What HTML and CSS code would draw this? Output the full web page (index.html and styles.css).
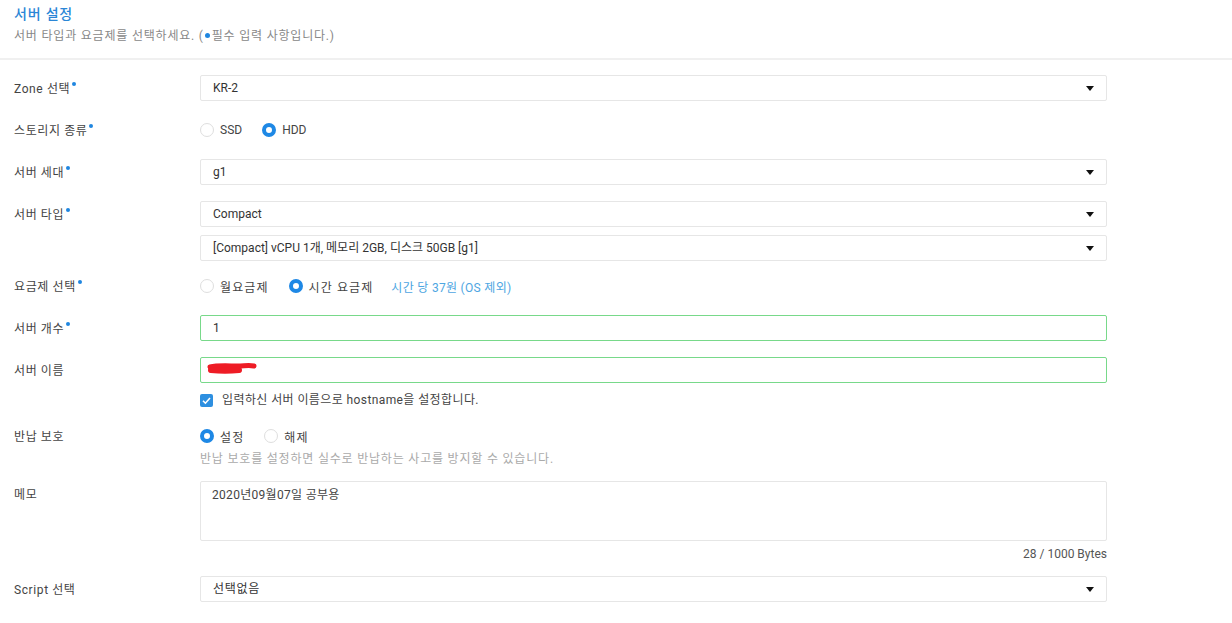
FILE: index.html
```html
<!DOCTYPE html>
<html lang="ko">
<head>
  <meta charset="UTF-8">
  <title>서버 설정</title>
  <link rel="stylesheet" href="styles.css">
</head>
<body>
  <div class="header">
    <h2 class="title">서버 설정</h2>
    <p class="subtitle">서버 타입과 요금제를 선택하세요. (<span class="dot"></span>필수 입력 사항입니다.)</p>
  </div>

  <div class="form">
    <div class="row">
      <div class="label">Zone 선택<span class="req"></span></div>
      <div class="control"><div class="select">KR-2<span class="caret"></span></div></div>
    </div>

    <div class="row">
      <div class="label">스토리지 종류<span class="req"></span></div>
      <div class="control radios">
        <label class="radio"><span class="circle"></span>SSD</label>
        <label class="radio on"><span class="circle"></span>HDD</label>
      </div>
    </div>

    <div class="row">
      <div class="label">서버 세대<span class="req"></span></div>
      <div class="control"><div class="select">g1<span class="caret"></span></div></div>
    </div>

    <div class="row">
      <div class="label">서버 타입<span class="req"></span></div>
      <div class="control"><div class="select">Compact<span class="caret"></span></div></div>
    </div>
    <div class="row sub">
      <div class="label"></div>
      <div class="control"><div class="select">[Compact] vCPU 1개, 메모리 2GB, 디스크 50GB [g1]<span class="caret"></span></div></div>
    </div>

    <div class="row">
      <div class="label">요금제 선택<span class="req"></span></div>
      <div class="control radios">
        <label class="radio ko"><span class="circle"></span>월요금제</label>
        <label class="radio ko on"><span class="circle"></span>시간 요금제</label>
        <span class="price">시간 당 37원 (OS 제외)</span>
      </div>
    </div>

    <div class="row">
      <div class="label">서버 개수<span class="req"></span></div>
      <div class="control"><div class="input valid">1</div></div>
    </div>

    <div class="row tight">
      <div class="label">서버 이름</div>
      <div class="control">
        <div class="input valid">
          <svg class="scribble" width="52" height="16" viewBox="0 0 52 16">
            <path d="M5 7 C13 5 24 6 33 6 C39 6 44 5 49 6" stroke="#ee1c25" stroke-width="5" fill="none" stroke-linecap="round"/>
            <path d="M6 10 C15 11 25 11 34 10" stroke="#ee1c25" stroke-width="6" fill="none" stroke-linecap="round"/>
          </svg>
        </div>
      </div>
    </div>
    <div class="row check-row">
      <div class="label"></div>
      <div class="control">
        <label class="check">
          <span class="box"><svg width="13" height="13" viewBox="0 0 13 13"><path d="M3 6.8 L5.4 9.2 L10 4" stroke="#fff" stroke-width="1.6" fill="none"/></svg></span>
          입력하신 서버 이름으로 hostname을 설정합니다.
        </label>
      </div>
    </div>

    <div class="row tight">
      <div class="label">반납 보호</div>
      <div class="control radios">
        <label class="radio ko on"><span class="circle"></span>설정</label>
        <label class="radio ko"><span class="circle"></span>해제</label>
      </div>
    </div>
    <div class="row help-row">
      <div class="label"></div>
      <div class="control help">반납 보호를 설정하면 실수로 반납하는 사고를 방지할 수 있습니다.</div>
    </div>

    <div class="row memo">
      <div class="label">메모</div>
      <div class="control">
        <div class="textarea">2020년09월07일 공부용</div>
        <div class="bytes">28 / 1000 Bytes</div>
      </div>
    </div>

    <div class="row">
      <div class="label">Script 선택</div>
      <div class="control"><div class="select ko">선택없음<span class="caret"></span></div></div>
    </div>
  </div>
</body>
</html>
```

FILE: styles.css
```css
body {
  margin: 0;
  background-color: #fff;
  color: #444;
  font-family: Roboto, "Noto Sans CJK KR", "Noto Sans", sans-serif;
  font-size: 12px;
}
.header {
  padding: 4px 14px 13px;
  border-bottom: 2px solid #f0f0f0;
}
.title {
  margin: 0;
  font-size: 14px;
  line-height: 20px;
  font-weight: 500;
  letter-spacing: 0.8px;
  color: #2b86d6;
}
.subtitle {
  margin: 3px 0 0;
  padding-top: 1px;
  line-height: 17px;
  letter-spacing: 0.8px;
  color: #888;
}
.dot {
  display: inline-block;
  width: 5px;
  height: 5px;
  margin: 0 2px 2px 1px;
  border-radius: 50%;
  background-color: #1f86e0;
  vertical-align: middle;
}
.form {
  padding-top: 15px;
}
.row {
  display: grid;
  grid-template-columns: 200px 907px;
  align-items: center;
  margin-bottom: 16px;
}
.row.sub { margin-top: -8px; margin-bottom: 12px; }
.row.tight { margin-bottom: 8px; }
.row.check-row { margin-bottom: 14px; }
.row.help-row { margin-top: -6px; margin-bottom: 14px; }
.row.memo { align-items: start; margin-bottom: 15px; }
.label {
  padding: 2px 0 0 14px;
  line-height: 24px;
  letter-spacing: 0.6px;
  color: #444;
}
.req {
  display: inline-block;
  width: 4px;
  height: 4px;
  margin-left: 2px;
  border-radius: 50%;
  background-color: #1f86e0;
  vertical-align: 7px;
}
.select, .input {
  position: relative;
  box-sizing: border-box;
  height: 26px;
  padding: 1px 0 0 12px;
  line-height: 23px;
  border: 1px solid #e6e6e6;
  border-radius: 2px;
  background-color: #fff;
  color: #333;
}
.select.ko { letter-spacing: 0.75px; }
.caret {
  position: absolute;
  right: 12px;
  top: 10px;
  border-left: 4px solid transparent;
  border-right: 4px solid transparent;
  border-top: 5px solid #111;
}
.input.valid {
  border-color: #78d98a;
}
.scribble {
  display: block;
  margin: 1px 0 0 -8px;
}
.radios {
  display: flex;
  align-items: center;
  height: 26px;
}
.radio {
  display: flex;
  align-items: center;
  margin-right: 20px;
  color: #444;
}
.radio.ko { letter-spacing: 1.1px; }
.circle {
  box-sizing: border-box;
  width: 14px;
  height: 14px;
  margin-right: 6px;
  border: 1px solid #dedede;
  border-radius: 50%;
  background-color: #fff;
}
.radio.on .circle {
  border: 4px solid #1e88e5;
}
.price {
  margin-left: 0;
  letter-spacing: 0.3px;
  color: #4ea6e2;
}
.radio + .price {
  margin-left: -2px;
}
.check {
  display: flex;
  align-items: center;
  line-height: 18px;
  letter-spacing: 0.4px;
  color: #444;
}
.box {
  display: block;
  width: 13px;
  height: 13px;
  margin-right: 9px;
  border-radius: 2px;
  background-color: #2d8fe0;
}
.box svg { display: block; }
.help {
  line-height: 16px;
  letter-spacing: 0.8px;
  color: #aaa;
}
.textarea {
  box-sizing: border-box;
  height: 60px;
  padding: 5px 11px;
  line-height: 16px;
  letter-spacing: 0.3px;
  border: 1px solid #e6e6e6;
  border-radius: 2px;
  color: #444;
}
.bytes {
  margin-top: 6px;
  line-height: 14px;
  text-align: right;
  color: #555;
}
```
